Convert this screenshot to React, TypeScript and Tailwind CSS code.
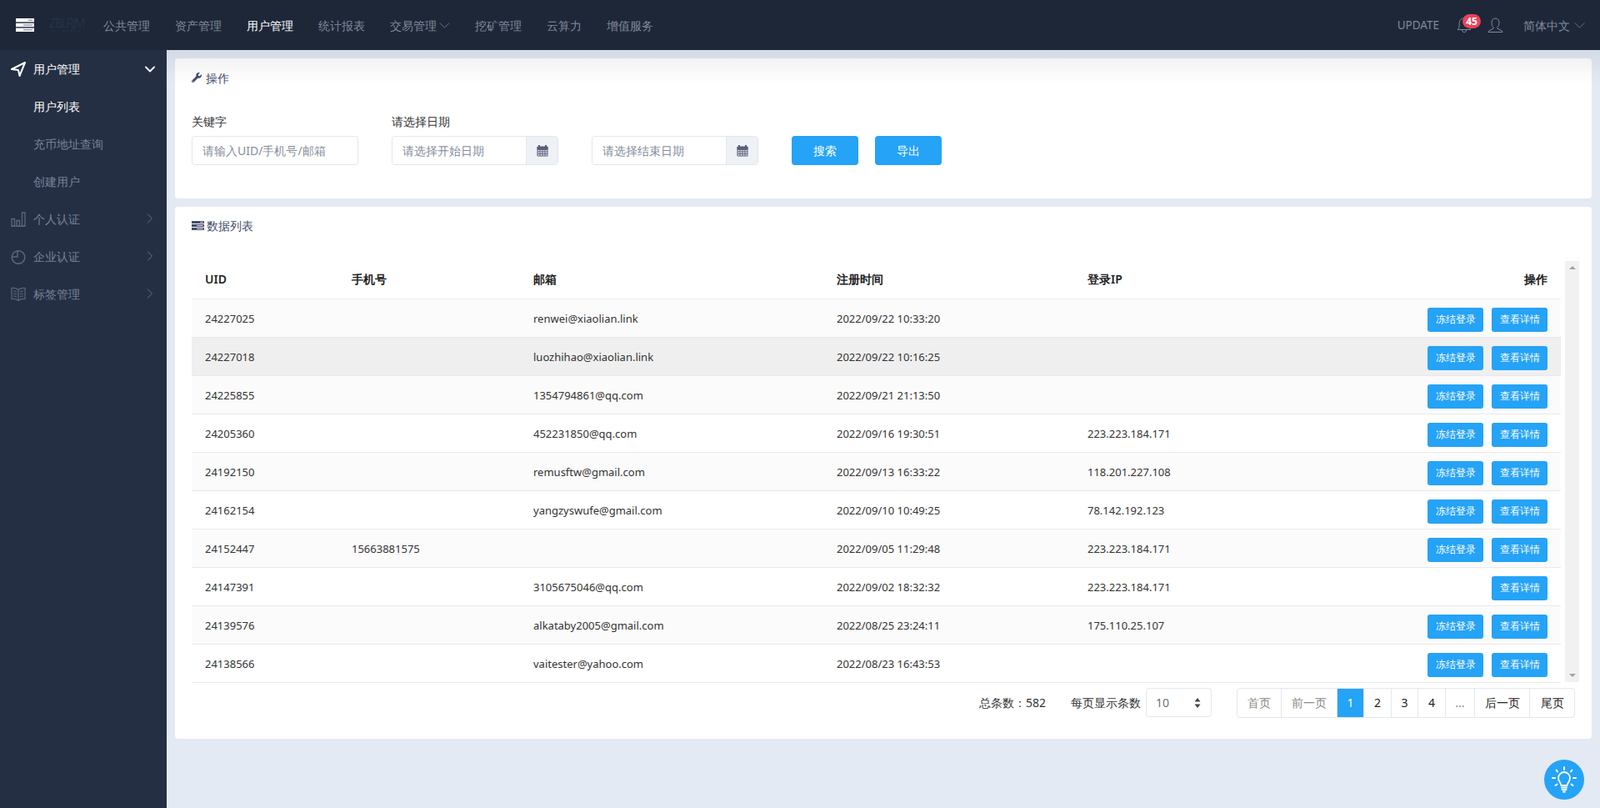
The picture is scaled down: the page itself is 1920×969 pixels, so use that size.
import React from "react";
import { FaWrench } from "react-icons/fa";

const nav = [
  { t: "公共管理" },
  { t: "资产管理" },
  { t: "用户管理", active: true },
  { t: "统计报表" },
  { t: "交易管理", caret: true },
  { t: "挖矿管理" },
  { t: "云算力" },
  { t: "增值服务" },
];

const rows = [
  ["24227025", "", "renwei@xiaolian.link", "2022/09/22 10:33:20", "", true],
  ["24227018", "", "luozhihao@xiaolian.link", "2022/09/22 10:16:25", "", true],
  ["24225855", "", "1354794861@qq.com", "2022/09/21 21:13:50", "", true],
  ["24205360", "", "452231850@qq.com", "2022/09/16 19:30:51", "223.223.184.171", true],
  ["24192150", "", "remusftw@gmail.com", "2022/09/13 16:33:22", "118.201.227.108", true],
  ["24162154", "", "yangzyswufe@gmail.com", "2022/09/10 10:49:25", "78.142.192.123", true],
  ["24152447", "15663881575", "", "2022/09/05 11:29:48", "223.223.184.171", true],
  ["24147391", "", "3105675046@qq.com", "2022/09/02 18:32:32", "223.223.184.171", false],
  ["24139576", "", "alkataby2005@gmail.com", "2022/08/25 23:24:11", "175.110.25.107", true],
  ["24138566", "", "vaitester@yahoo.com", "2022/08/23 16:43:53", "", true],
] as const;

function ServerIcon({ className, gap }: { className: string; gap: string }) {
  return (
    <svg viewBox="0 0 22 16" className={className} fill="currentColor">
      <rect x="0" y="0" width="22" height="4.4" />
      <rect x="0" y="5.8" width="22" height="4.4" />
      <rect x="0" y="11.6" width="22" height="4.4" />
      <rect x="15" y="1.6" width="5" height="1.2" fill={gap} />
      <rect x="9" y="7.4" width="11" height="1.2" fill={gap} />
      <rect x="9" y="13.2" width="11" height="1.2" fill={gap} />
    </svg>
  );
}

function Chevron({ dir, className }: { dir: "right" | "down"; className: string }) {
  return (
    <svg viewBox="0 0 12 12" className={className} fill="none" stroke="currentColor" strokeLinecap="round" strokeLinejoin="round">
      {dir === "right" ? <path d="M3.5 1 8.5 6l-5 5" /> : <path d="M1 3.5 6 8.5l5-5" />}
    </svg>
  );
}

function CalendarIcon() {
  return (
    <svg viewBox="0 0 14 15" className="h-[15px] w-[14px]" fill="none" stroke="currentColor" strokeWidth="1">
      <path d="M1 3h12v11H1zM1 6.500h12M1 9h12M1 11.500h12M4 6.500V14M7 6.500V14M10 6.500V14" />
      <path d="M3 1v3M11 1v3" strokeWidth="2" />
      <path d="M1 3.500h12V6H1z" fill="currentColor" />
    </svg>
  );
}

function SideItem({ label, icon }: { label: string; icon: React.ReactNode }) {
  return (
    <div className="relative flex h-[45px] items-center pl-[13px] text-[14px] text-[#77839b]">
      <span className="flex w-[18px] justify-center text-[#5c677b]">{icon}</span>
      <span className="ml-[9px]">{label}</span>
      <Chevron dir="right" className="absolute left-[174px] top-[16px] h-[12px] w-[12px] text-[#66728a]" />
    </div>
  );
}

function Btn({ children }: { children: React.ReactNode }) {
  return (
    <span className="inline-flex h-[29px] w-[67px] items-center justify-center rounded-[3px] bg-[#25a3f6] text-[12.25px] text-white">
      {children}
    </span>
  );
}

function DateInput({ placeholder }: { placeholder: string }) {
  return (
    <div className="flex h-[35px] w-[200px] overflow-hidden rounded-[4px] border border-[#e4e7ec]">
      <input
        readOnly
        placeholder={placeholder}
        className="w-[160px] bg-white pl-[12px] text-[14px] outline-none placeholder:text-[#858d9b]"
      />
      <span className="flex flex-1 items-center justify-center border-l border-[#e4e7ec] bg-[#eef1f5] text-[#5b5f7a]">
        <CalendarIcon />
      </span>
    </div>
  );
}

function Page({ w, children, tone, last }: { w: string; children: React.ReactNode; tone: string; last?: boolean }) {
  return (
    <span className={`${w} ${tone} ${last ? "" : "border-r border-[#e4e7ec]"} flex h-full items-center justify-center text-[14px]`}>
      {children}
    </span>
  );
}

export default function App() {
  return (
    <div className="flex h-[969px] w-[1920px] flex-col overflow-hidden bg-[#e3eaf4] font-['Open_Sans','Noto_Sans_CJK_SC',sans-serif] text-[#333]">
      <header className="flex h-[60px] shrink-0 items-center bg-[#1e2738]">
        <ServerIcon className="ml-[19px] h-[16px] w-[22px] text-white" gap="#7d8796" />
        <div className="ml-[20px] flex w-[38px] flex-col items-center leading-none text-[#263850]">
          <span className="text-[14px] font-light tracking-[-1px]">ZBLRJM</span>
          <span className="mt-[1px] whitespace-nowrap text-[4px] tracking-[2px]">EXCHANGE</span>
        </div>
        <nav className="ml-[10px] flex items-center">
          {nav.map((n) => (
            <span
              key={n.t}
              className={`flex items-center px-[15px] text-[14px] ${n.active ? "font-medium text-white" : "text-[#7e8a9c]"}`}
            >
              {n.t}
              {n.caret && <Chevron dir="down" className="ml-[3px] h-[13px] w-[13px] stroke-[0.7]" />}
            </span>
          ))}
        </nav>
        <div className="ml-auto flex items-center text-[#7e8a9c]">
          <span className="text-[13.5px]">UPDATE</span>
          <span className="relative ml-[21px] h-[20px] w-[18px]">
            <svg viewBox="0 0 18 20" className="h-[20px] w-[18px]" fill="none" stroke="currentColor" strokeWidth="1">
              <path d="M1 15.5c1.6-1.2 2.2-2.8 2.2-5.5V7.5a5.8 5.8 0 0 1 11.6 0V10c0 2.7.6 4.300 2.200 5.500z" />
              <path d="M6.500 16c0 3.600 5 3.600 5 0" />
            </svg>
            <span className="absolute -top-[3px] left-[7px] flex h-[17px] w-[22px] items-center justify-center rounded-full bg-[#e9435a] text-[12px] font-bold text-white">
              45
            </span>
          </span>
          <svg viewBox="0 0 18 19" className="ml-[19px] h-[19px] w-[19px]" fill="none" stroke="currentColor" strokeWidth="1">
            <path d="M6.500 11.500C5 10.300 4.500 8.500 4.500 6.200 4.500 3 6.300 1 9 1s4.500 2 4.500 5.200c0 2.300-.5 4.100-2 5.300v1.800l5 2.500c.7.400 1 .9 1 1.700H.500c0-.8.300-1.300 1-1.700l5-2.500z" />
          </svg>
          <span className="ml-[24px] text-[14px]">简体中文</span>
          <Chevron dir="down" className="ml-[5px] mr-[18px] h-[13px] w-[13px] stroke-[0.7]" />
        </div>
      </header>

      <div className="flex min-h-0 flex-1">
        <aside className="w-[200px] shrink-0 bg-[#252f43]">
          <div className="relative flex h-[45px] items-center pl-[13px] text-[14px] font-medium text-white">
            <svg viewBox="0 0 18 18" className="h-[18px] w-[18px]" fill="none" stroke="currentColor" strokeWidth="2" strokeLinejoin="round">
              <path d="M17 1 1 9l8 1 1.500 7z" />
            </svg>
            <span className="ml-[9px]">用户管理</span>
            <Chevron dir="down" className="absolute left-[174px] top-[17px] h-[12px] w-[12px] stroke-[1.8] text-white" />
          </div>
          <div className="flex h-[45px] items-center pl-[40px] text-[14px] text-white">用户列表</div>
          <div className="flex h-[45px] items-center pl-[40px] text-[14px] text-[#77839b]">充币地址查询</div>
          <div className="flex h-[45px] items-center pl-[40px] text-[14px] text-[#77839b]">创建用户</div>
          <SideItem
            label="个人认证"
            icon={
              <svg viewBox="0 0 18 18" className="h-[18px] w-[18px]" fill="none" stroke="currentColor" strokeWidth="1.300">
                <path d="M.700 17.300h16.600M1 8.500h3.500v8.500H1zM7 10.500h3.500V17H7zM13.500 1H17v16h-3.500z" />
              </svg>
            }
          />
          <SideItem
            label="企业认证"
            icon={
              <svg viewBox="0 0 18 18" className="h-[18px] w-[18px]" fill="none" stroke="currentColor" strokeWidth="1.500">
                <circle cx="9" cy="9.500" r="7.800" />
                <path d="M8 1.700V9H1.200" />
              </svg>
            }
          />
          <SideItem
            label="标签管理"
            icon={
              <svg viewBox="0 0 18 18" className="h-[18px] w-[18px]" fill="none" stroke="currentColor" strokeWidth="1.200">
                <path d="M9 3.500C7 1.800 4 1.300 1 1.500v13c3-.2 6 .3 8 2 2-1.700 5-2.200 8-2v-13c-3-.2-6 .3-8 2zM9 3.500v13M3 5c1.500 0 3 .3 4 1M3 8c1.500 0 3 .3 4 1M3 11c1.500 0 3 .3 4 1M15 5c-1.500 0-3 .3-4 1M15 8c-1.500 0-3 .3-4 1M15 11c-1.500 0-3 .3-4 1" />
              </svg>
            }
          />
        </aside>

        <main className="relative min-w-0 flex-1 px-[10px] pt-[10px]">
          <div className="pointer-events-none absolute inset-x-0 top-0 h-[40px] bg-gradient-to-b from-[#1e273814] to-transparent" />

          <section className="h-[168px] rounded-[4px] bg-white px-[20px] pt-[14px]">
            <div className="flex h-[18px] items-center text-[14px] text-[#414b6b]">
              <FaWrench className="h-[12px] w-[12px]" />
              <span className="ml-[5px]">操作</span>
            </div>
            <div className="mt-[34px] flex items-end">
              <div>
                <div className="mb-[7px] text-[14px] leading-[20px] text-[#333]">关键字</div>
                <input
                  readOnly
                  placeholder="请输入UID/手机号/邮箱"
                  className="h-[35px] w-[200px] rounded-[4px] border border-[#e4e7ec] pl-[12px] text-[14px] outline-none placeholder:text-[#858d9b]"
                />
              </div>
              <div className="ml-[40px]">
                <div className="mb-[7px] text-[14px] leading-[20px] text-[#333]">请选择日期</div>
                <DateInput placeholder="请选择开始日期" />
              </div>
              <div className="ml-[40px]">
                <DateInput placeholder="请选择结束日期" />
              </div>
              <span className="ml-[40px] flex h-[35px] w-[80px] items-center justify-center rounded-[4px] bg-[#25a3f6] text-[14px] text-white">搜索</span>
              <span className="ml-[20px] flex h-[35px] w-[80px] items-center justify-center rounded-[4px] bg-[#25a3f6] text-[14px] text-white">导出</span>
            </div>
          </section>

          <section className="mt-[10px] h-[638px] rounded-[4px] bg-white pl-[20px] pr-[15px] pt-[13px]">
            <div className="flex h-[18px] items-center text-[14px] text-[#414b6b]">
              <ServerIcon className="h-[11px] w-[15px]" gap="#ffffff" />
              <span className="ml-[3px]">数据列表</span>
            </div>
            <div className="mt-[34px] flex">
              <table className="w-[1643px] table-fixed border-collapse text-[13px] text-[#333]">
                <colgroup>
                  <col className="w-[176px]" />
                  <col className="w-[218px]" />
                  <col className="w-[364px]" />
                  <col className="w-[301px]" />
                  <col className="w-[300px]" />
                  <col />
                </colgroup>
                <thead>
                  <tr className="h-[45px] border-b border-[#eeeeee] text-left text-[14px] font-semibold text-[#222]">
                    <th className="pb-[2px] pl-[16px] font-semibold">UID</th>
                    <th className="pb-[2px] pl-[16px] font-semibold">手机号</th>
                    <th className="pb-[2px] pl-[16px] font-semibold">邮箱</th>
                    <th className="pb-[2px] pl-[16px] font-semibold">注册时间</th>
                    <th className="pb-[2px] pl-[16px] font-semibold">登录IP</th>
                    <th className="pb-[2px] pr-[16px] text-right font-semibold">操作</th>
                  </tr>
                </thead>
                <tbody>
                  {rows.map((r, i) => (
                    <tr
                      key={r[0]}
                      className={`h-[46px] border-b border-[#e9e9e9] ${i === 1 ? "bg-[#efefef]" : i % 2 === 0 ? "bg-[#fbfbfb]" : "bg-white"}`}
                    >
                      <td className="pl-[16px] pt-[4px]">{r[0]}</td>
                      <td className="pl-[16px] pt-[4px]">{r[1]}</td>
                      <td className="pl-[16px] pt-[4px]">{r[2]}</td>
                      <td className="pl-[16px] pt-[4px]">{r[3]}</td>
                      <td className="pl-[16px] pt-[4px]">{r[4]}</td>
                      <td className="pr-[16px] pt-[4px]">
                        <div className="flex items-center justify-end gap-[10px]">
                          {r[5] && <Btn>冻结登录</Btn>}
                          <Btn>查看详情</Btn>
                        </div>
                      </td>
                    </tr>
                  ))}
                </tbody>
              </table>
              <div className="ml-[5px] flex h-[505px] w-[17px] flex-col items-center justify-between bg-[#f1f1f1] py-[6px]">
                <span className="h-0 w-0 border-x-[4px] border-b-[4px] border-x-transparent border-b-[#a3a3a3]" />
                <span className="h-0 w-0 border-x-[4px] border-t-[4px] border-x-transparent border-t-[#a3a3a3]" />
              </div>
            </div>
            <div className="mt-[6px] flex items-center justify-end pr-[5px] text-[14px]">
              <span className="text-[#333]">总条数：582</span>
              <span className="ml-[30px] text-[#333]">每页显示条数</span>
              <span className="relative ml-[6px] flex h-[35px] w-[79px] items-center rounded-[4px] border border-[#e4e7ec] pl-[11px] text-[14px] text-[#6b7280]">
                10
                <svg viewBox="0 0 8 14" className="absolute right-[12px] top-[10px] h-[14px] w-[8px] text-[#444]" fill="currentColor">
                  <path d="M4 1 7.500 5.500h-7zM4 13 .500 8.500h7z" />
                </svg>
              </span>
              <div className="ml-[30px] flex h-[36px] items-center overflow-hidden rounded-[4px] border border-[#e4e7ec]">
                <Page w="w-[53px]" tone="text-[#8a8a8a]">首页</Page>
                <Page w="w-[67px]" tone="text-[#8a8a8a]">前一页</Page>
                <Page w="w-[32px]" tone="bg-[#25a3f6] text-white">1</Page>
                <Page w="w-[33px]" tone="text-[#222]">2</Page>
                <Page w="w-[32px]" tone="text-[#222]">3</Page>
                <Page w="w-[33px]" tone="text-[#222]">4</Page>
                <Page w="w-[35px]" tone="text-[#8a8a8a]">...</Page>
                <Page w="w-[66px]" tone="text-[#222]">后一页</Page>
                <Page w="w-[53px]" tone="text-[#222]" last>尾页</Page>
              </div>
            </div>
          </section>

          <span className="absolute left-[1653px] top-[851px] flex h-[48px] w-[48px] items-center justify-center rounded-full bg-[#25a3f6] text-white">
            <svg viewBox="0 0 30 32" className="h-[32px] w-[30px]" fill="none" stroke="currentColor" strokeWidth="1.800" strokeLinecap="round">
              <path d="M11.500 23c0-3-3.500-4.500-3.500-9a7 7 0 0 1 14 0c0 4.500-3.500 6-3.500 9z" />
              <path d="M12 25.500h6M12.500 28h5M14 30.500h2" strokeWidth="2" />
              <path d="M15 1v3M5.500 4.500l1.500 2M24.500 4.500l-1.500 2M1 14h3M26 14h3M4.500 23l2-1.500M25.500 23l-2-1.500" strokeWidth="2" />
            </svg>
          </span>
        </main>
      </div>
    </div>
  );
}
